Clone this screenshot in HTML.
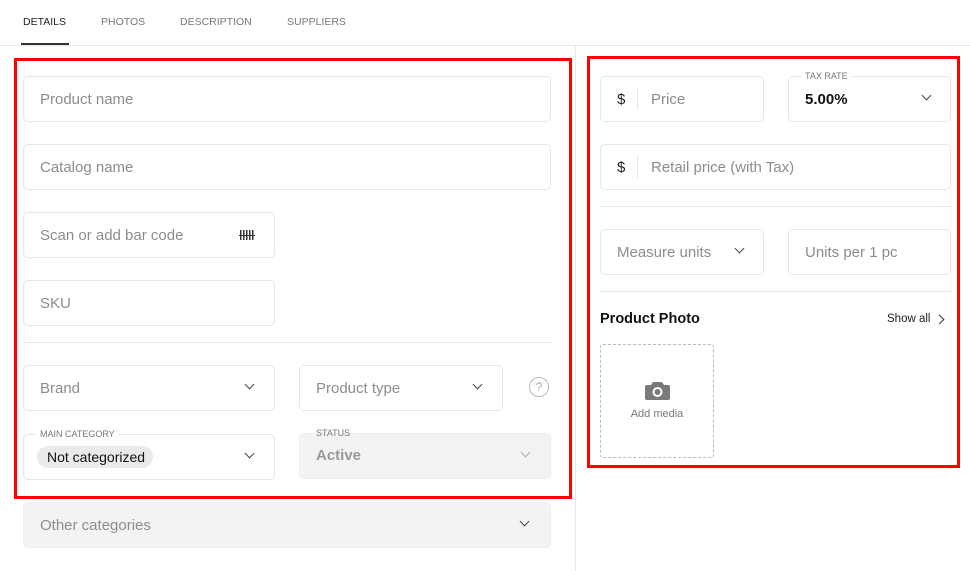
<!DOCTYPE html>
<html><head><meta charset="utf-8"><style>
*{box-sizing:border-box;margin:0;padding:0}
body{width:970px;height:571px;background:#fff;font-family:"Liberation Sans",sans-serif;position:relative;overflow:hidden;color:#222}
.a{position:absolute}
.f{position:absolute;border:1px solid #e6e6e6;border-radius:5px;height:46px;background:#fff}
.g{background:#f3f3f3;border-color:#ececec}
.ph{position:absolute;left:16px;top:14px;font-size:15px;color:#8c8c8c;white-space:nowrap}
.chev{position:absolute;top:17px;width:7px;height:7px;border-right:1.2px solid #444;border-bottom:1.2px solid #444;transform:rotate(45deg)}
.tab{position:absolute;top:16px;font-size:10.5px;color:#777}
.lbl{position:absolute;font-size:9px;color:#777;background:#fff;padding:0 4px;top:-6px;left:12px}
.hr{position:absolute;height:1px;background:#e6e6e6}
.red{position:absolute;border:3px solid #f00}
</style></head><body>
<div class="tab" style="left:23px;color:#222">DETAILS</div>
<div class="a" style="left:21px;top:43px;width:48px;height:2px;background:#333"></div>
<div class="tab" style="left:101px">PHOTOS</div>
<div class="tab" style="left:180px">DESCRIPTION</div>
<div class="tab" style="left:287px">SUPPLIERS</div>
<div class="hr" style="left:0;top:45px;width:970px"></div>
<div class="a" style="left:575px;top:46px;width:1px;height:525px;background:#e6e6e6"></div>

<div class="f" style="left:23px;top:76px;width:528px"><div class="ph">Product name</div></div>
<div class="f" style="left:23px;top:144px;width:528px"><div class="ph">Catalog name</div></div>
<div class="f" style="left:23px;top:212px;width:252px"><div class="ph">Scan or add bar code</div>
<div class="a" style="left:216px;top:17px;width:14px;height:10px;background:repeating-linear-gradient(90deg,#333 0 1.5px,transparent 1.5px 3px)"></div>
<div class="a" style="left:215px;top:22px;width:16px;height:1px;background:#333"></div></div>
<div class="f" style="left:23px;top:280px;width:252px"><div class="ph">SKU</div></div>
<div class="hr" style="left:23px;top:342px;width:528px"></div>
<div class="f" style="left:23px;top:365px;width:252px"><div class="ph">Brand</div><div class="chev" style="left:222px;top:15px"></div></div>
<div class="f" style="left:299px;top:365px;width:204px"><div class="ph">Product type</div><div class="chev" style="left:174px;top:15px"></div></div>
<div class="a" style="left:529px;top:377px;width:20px;height:20px;border:1.3px solid #bbb;border-radius:50%;font-size:12px;color:#aaa;text-align:center;line-height:18px">?</div>
<div class="f" style="left:23px;top:434px;width:252px"><div class="lbl">MAIN CATEGORY</div>
<div class="a" style="left:13px;top:11px;background:#eaeaea;border-radius:11px;padding:3px 8px 3px 10px;font-size:14px;color:#111">Not categorized</div><div class="chev" style="left:222px;top:15px"></div></div>
<div class="f g" style="left:299px;top:433px;width:252px"><div class="lbl" style="background:linear-gradient(#fff 50%,#f3f3f3 50%)">STATUS</div><div class="ph" style="font-weight:bold;color:#999;top:13px">Active</div><div class="chev" style="left:222px;top:15px;border-color:#aaa"></div></div>
<div class="f g" style="left:23px;top:502px;width:528px"><div class="ph">Other categories</div><div class="chev" style="left:497px;top:15px"></div></div>

<div class="f" style="left:600px;top:76px;width:164px"><div class="ph" style="color:#222">$</div><div class="a" style="left:36px;top:11px;width:1px;height:22px;background:#e6e6e6"></div><div class="ph" style="left:50px">Price</div></div>
<div class="f" style="left:788px;top:76px;width:163px"><div class="lbl">TAX RATE</div><div class="ph" style="color:#111;font-weight:bold">5.00%</div><div class="chev" style="left:134px;top:15px"></div></div>
<div class="f" style="left:600px;top:144px;width:351px"><div class="ph" style="color:#222">$</div><div class="a" style="left:36px;top:11px;width:1px;height:22px;background:#e6e6e6"></div><div class="ph" style="left:50px">Retail price (with Tax)</div></div>
<div class="hr" style="left:600px;top:206px;width:351px"></div>
<div class="f" style="left:600px;top:229px;width:164px"><div class="ph">Measure units</div><div class="chev" style="left:135px;top:15px"></div></div>
<div class="f" style="left:788px;top:229px;width:163px"><div class="ph">Units per 1 pc</div></div>
<div class="hr" style="left:600px;top:291px;width:351px"></div>
<div class="a" style="left:600px;top:311px;font-size:14.5px;font-weight:bold;color:#111">Product Photo</div>
<div class="a" style="left:887px;top:313px;font-size:11.5px;color:#222">Show all</div>
<div class="a" style="left:936px;top:316px;width:7px;height:7px;border-right:1.2px solid #333;border-top:1.2px solid #333;transform:rotate(45deg)"></div>
<div class="a" style="left:600px;top:344px;width:114px;height:114px;border:1px dashed #bbb;border-radius:3px">
<svg class="a" style="left:44px;top:35px" width="25" height="20" viewBox="0 0 25 20"><path d="M8 2h9l2 3h4a2 2 0 0 1 2 2v11a2 2 0 0 1-2 2H2a2 2 0 0 1-2-2V7a2 2 0 0 1 2-2h4z" fill="#7a7a7a"/><circle cx="12.5" cy="12" r="5" fill="#fff"/><circle cx="12.5" cy="12" r="3" fill="#7a7a7a"/></svg>
<div class="a" style="left:0;width:112px;top:63px;text-align:center;font-size:11px;color:#777">Add media</div></div>

<div class="red" style="left:14px;top:58px;width:558px;height:441px"></div>
<div class="red" style="left:587px;top:56px;width:373px;height:412px"></div>
</body></html>
